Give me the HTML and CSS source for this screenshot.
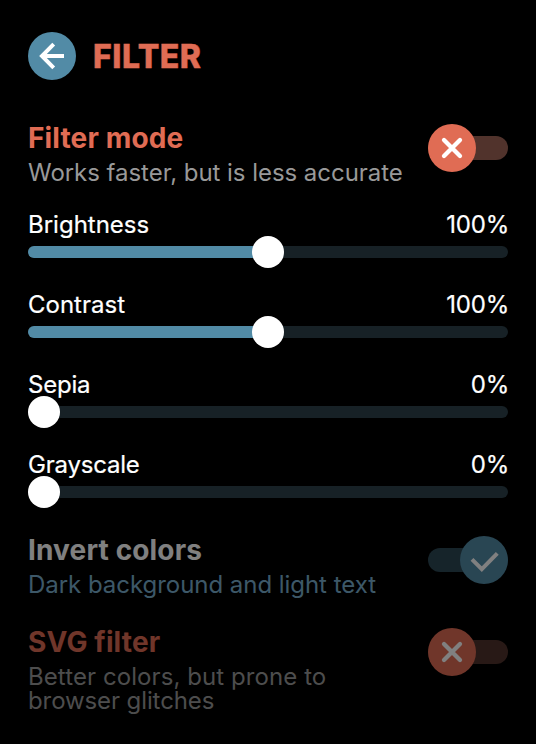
FILE: index.html
```html
<!DOCTYPE html>
<html lang="en">
<head>
<meta charset="utf-8">
<title>Filter</title>
<link rel="stylesheet" href="styles.css">
</head>
<body>
<main class="panel">
  <header class="header">
    <button class="back" aria-label="Back"><svg viewBox="0 0 48 48"><path d="M36 24H14M25.700 12.200L14 24L25.700 35.800"/></svg></button>
    <h1>FILTER</h1>
  </header>
  <section class="row mode">
    <div class="copy"><h2>Filter mode</h2><p>Works faster, but is less accurate</p></div>
    <div class="toggle off"><span class="knob"><svg class="cross" viewBox="0 0 48 48"><path d="M16 16L32 32M32 16L16 32"/></svg></span></div>
  </section>
  <section class="sliders">
    <div class="slider half"><div class="labels"><span>Brightness</span><span class="value">100%</span></div><div class="track"><div class="fill"></div><div class="thumb"></div></div></div>
    <div class="slider half"><div class="labels"><span>Contrast</span><span class="value">100%</span></div><div class="track"><div class="fill"></div><div class="thumb"></div></div></div>
    <div class="slider"><div class="labels"><span class="sepia">Sepia</span><span class="value">0%</span></div><div class="track"><div class="fill"></div><div class="thumb"></div></div></div>
    <div class="slider"><div class="labels"><span class="grayscale">Grayscale</span><span class="value">0%</span></div><div class="track"><div class="fill"></div><div class="thumb"></div></div></div>
  </section>
  <section class="row invert disabled">
    <div class="copy"><h2>Invert colors</h2><p>Dark background and light text</p></div>
    <div class="toggle on"><span class="knob"><svg viewBox="0 0 48 48"><path d="M12 23.300L21.800 33.200L37.300 17.400"/></svg></span></div>
  </section>
  <section class="row svg-mode disabled">
    <div class="copy"><h2>SVG filter</h2><p>Better colors, but prone to<br><span class="glitches">browser glitches</span></p></div>
    <div class="toggle off"><span class="knob"><svg class="cross" viewBox="0 0 48 48"><path d="M16 16L32 32M32 16L16 32"/></svg></span></div>
  </section>
</main>
</body>
</html>
```
FILE: styles.css
```css
* { box-sizing: border-box; }
body { margin: 0; background: #000; font-family: Inter, sans-serif; }
.panel { width: 536px; height: 744px; padding: 32px 28px 0; overflow: hidden; color: #fff; }
.header { display: flex; align-items: center; gap: 17px; height: 48px; }
.back { width: 48px; height: 48px; padding: 0; border: 0; border-radius: 50%; background: #528ba6; }
svg { display: block; width: 48px; height: 48px; fill: none; stroke: #fff; stroke-width: 4; }
.cross { stroke-width: 4.300; stroke-linecap: round; }
h1, h2, p { margin: 0; }
h1 { padding-top: 2px; color: #e06c54; font-size: 32px; line-height: 48px; font-weight: 800; letter-spacing: .5px; -webkit-text-stroke: .4px currentColor; }
.row { display: flex; justify-content: space-between; align-items: flex-start; }
.mode { margin-top: 44px; height: 86px; }
h2 { color: #e06c54; font-size: 28px; line-height: 28px; font-weight: 700; letter-spacing: .15px; white-space: nowrap; }
p { margin-top: 9px; color: #999; font-size: 24px; line-height: 24px; letter-spacing: -.04px; white-space: nowrap; }
.toggle { display: flex; align-items: center; width: 80px; height: 24px; margin-top: 12px; border-radius: 12px; background: #51332c; }
.knob { flex: none; width: 48px; height: 48px; border-radius: 50%; background: #e06c54; }
.on { justify-content: flex-end; background: #2c4855; }
.on .knob { background: #528ba6; }
.slider { height: 80px; }
.labels { display: flex; justify-content: space-between; height: 36px; font-size: 24px; line-height: 30px; -webkit-text-stroke: .2px currentColor; }
.value { letter-spacing: -.2px; margin-right: -1px; }
.sepia, .grayscale { letter-spacing: -.2px; }
.track { display: flex; align-items: center; width: 480px; height: 12px; border-radius: 6px; background: #172126; }
.fill { flex: none; width: 0; height: 12px; border-radius: 6px 0 0 6px; background: #528ba6; }
.half .fill { width: 240px; }
.thumb { flex: none; width: 32px; height: 32px; border-radius: 50%; background: #fff; }
.half .thumb { margin-left: -16px; }
.disabled { opacity: .5; }
.invert { margin-top: 6px; height: 92px; }
.invert h2 { color: #fff; }
.invert p { color: #7bb0d0; }
.svg-mode p { letter-spacing: .08px; }
.glitches { letter-spacing: -.1px; }
```
